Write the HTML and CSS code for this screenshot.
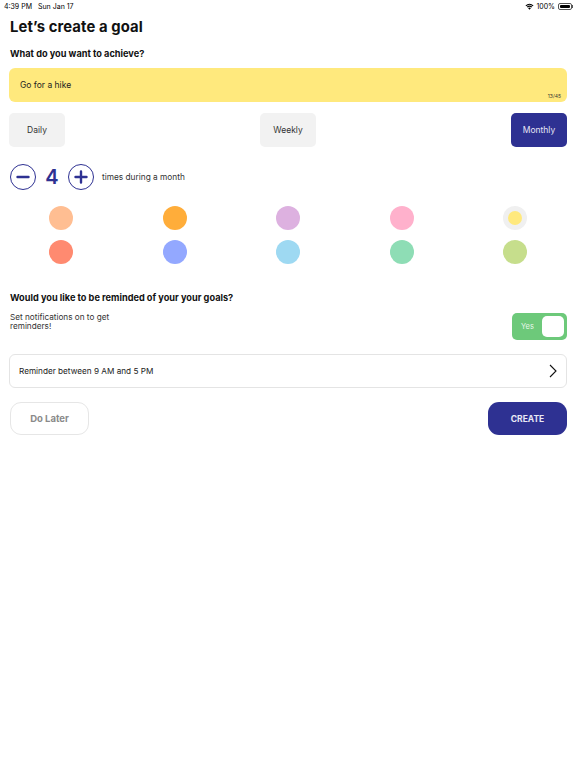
FILE: index.html
```html
<!DOCTYPE html>
<html>
<head>
<meta charset="utf-8">
<link rel="stylesheet" href="styles.css">
</head>
<body>
<div class="statusbar">
  <div class="sb-left"><span>4:39 PM</span><span>Sun Jan 17</span></div>
  <div class="sb-right">
    <svg class="wifi" width="9" height="7" viewBox="0 0 18 14"><path d="M9 13.5 L6 10.2 A4.5 4.5 0 0 1 12 10.2 Z" fill="#000"/><path d="M3.6 7.6 A8 8 0 0 1 14.4 7.6 L13 9.1 A6 6 0 0 0 5 9.1 Z" fill="#000"/><path d="M1 4.8 A11.8 11.8 0 0 1 17 4.8 L15.6 6.3 A9.8 9.8 0 0 0 2.4 6.3 Z" fill="#000"/></svg>
    <span>100%</span>
    <div class="battery"><div class="bat-body"><div class="bat-fill"></div></div><div class="bat-tip"></div></div>
  </div>
</div>
<main class="page">
  <h1 class="title">Let’s create a goal</h1>
  <h2 class="label">What do you want to achieve?</h2>
  <div class="goal-input">
    <span class="goal-text">Go for a hike</span>
    <span class="counter">13/45</span>
  </div>
  <div class="segments">
    <div class="seg">Daily</div>
    <div class="seg">Weekly</div>
    <div class="seg active">Monthly</div>
  </div>
  <div class="stepper">
    <div class="step-btn"><svg width="26" height="26" viewBox="0 0 26 26"><circle cx="13" cy="13" r="12.5" fill="none" stroke="#2e3192" stroke-width="1"/><path d="M7.5 13 H18.5" stroke="#2e3192" stroke-width="2.4" stroke-linecap="round"/></svg></div>
    <div class="count">4</div>
    <div class="step-btn"><svg width="26" height="26" viewBox="0 0 26 26"><circle cx="13" cy="13" r="12.5" fill="none" stroke="#2e3192" stroke-width="1"/><path d="M7.5 13 H18.5 M13 7.5 V18.5" stroke="#2e3192" stroke-width="2.4" stroke-linecap="round"/></svg></div>
    <div class="step-label">times during a month</div>
  </div>
</main>
<div class="colors">
  <div class="dot" style="background:#ffbe92"></div>
  <div class="dot" style="background:#ffad3a"></div>
  <div class="dot" style="background:#ddb1e0"></div>
  <div class="dot" style="background:#ffb1cc"></div>
  <div class="dot selected"><div class="inner" style="background:#ffe97d"></div></div>
  <div class="dot" style="background:#ff8a70"></div>
  <div class="dot" style="background:#93a8ff"></div>
  <div class="dot" style="background:#9ed9f2"></div>
  <div class="dot" style="background:#8eddb5"></div>
  <div class="dot" style="background:#c6de8c"></div>
</div>
<section class="page">
  <h2 class="label remind-title">Would you like to be reminded of your your goals?</h2>
  <div class="notify-row">
    <p class="notify-text">Set notifications on to get<br>reminders!</p>
    <div class="toggle"><span>Yes</span><div class="knob"></div></div>
  </div>
  <div class="reminder">
    <span>Reminder between 9 AM and 5 PM</span>
    <svg width="8" height="14" viewBox="0 0 8 14"><path d="M1 1 L7 7 L1 13" fill="none" stroke="#111" stroke-width="1.1"/></svg>
  </div>
  <div class="actions">
    <div class="btn later">Do Later</div>
    <div class="btn create">CREATE</div>
  </div>
</section>
</body>
</html>
```
FILE: styles.css
```css
* { box-sizing: border-box; }
html, body { margin: 0; padding: 0; background: #fff; }
body { font-family: "Inter", "Liberation Sans", sans-serif; color: #111; width: 576px; }

.statusbar { height: 12px; display: flex; justify-content: space-between; align-items: center; padding: 0 3px 0 4px; font-size: 7px; color: #000; }
.sb-left { display: flex; gap: 6px; }
.sb-right { display: flex; align-items: center; gap: 2px; }
.battery { display: flex; align-items: center; margin-left: 1px; }
.bat-body { width: 14px; height: 7px; border: 1px solid #555; border-radius: 2px; padding: 1px; }
.bat-fill { width: 100%; height: 100%; background: #000; border-radius: 1px; }
.bat-tip { width: 1px; height: 3px; background: #555; }

.page { padding: 0 9px 0 9px; }
.title { margin: 5px 0 0 1px; font-size: 14.8px; font-weight: 700; line-height: 20px; letter-spacing: 0.1px; }
.label { margin: 10px 0 0 1px; font-size: 9.2px; font-weight: 700; line-height: 14px; }

.goal-input { margin-top: 7px; height: 34px; background: #ffe97d; border-radius: 6px; position: relative; display: flex; align-items: center; padding-left: 11px; }
.goal-text { font-size: 8.5px; color: #222; }
.counter { position: absolute; right: 6px; bottom: 3px; font-size: 5px; color: #333; }

.segments { margin-top: 11px; display: flex; justify-content: space-between; }
.seg { width: 56px; height: 34px; border-radius: 5px; background: #f2f2f2; display: flex; align-items: center; justify-content: center; font-size: 8.5px; color: #333; }
.seg.active { background: #2e3192; color: #e6e6f5; }

.stepper { margin-top: 17px; display: flex; align-items: center; height: 26px; }
.step-btn { width: 28px; height: 28px; display: flex; align-items: center; justify-content: center; }
.count { width: 30px; text-align: center; font-size: 20px; font-weight: 600; color: #2e3192; }
.step-label { margin-left: 7px; font-size: 8.3px; color: #333; }

.colors { margin-top: 16px; display: grid; grid-template-columns: repeat(5, 113.5px); justify-content: center; row-gap: 10px; }
.dot { justify-self: center; width: 24px; height: 24px; border-radius: 50%; display: flex; align-items: center; justify-content: center; }
.dot.selected { background: #f0f0f0; }
.dot .inner { width: 14px; height: 14px; border-radius: 50%; }

.remind-title { margin-top: 27px; }
.notify-row { margin-top: 8px; display: flex; justify-content: space-between; align-items: flex-start; }
.notify-text { margin: 0 0 0 1px; font-size: 8.2px; line-height: 9px; color: #333; }
.toggle { width: 55px; height: 27px; background: #6dc97a; border-radius: 5px; display: flex; align-items: center; justify-content: space-between; padding: 0 3px 0 9px; }
.toggle span { font-size: 7.5px; color: #e8f6ea; }
.knob { width: 22px; height: 21px; background: #fff; border-radius: 5px; }

.reminder { margin-top: 14px; height: 34px; border: 1px solid #e4e4e4; border-radius: 6px; display: flex; align-items: center; justify-content: space-between; padding: 0 9px 0 9px; font-size: 8.2px; color: #222; }

.actions { margin-top: 14px; display: flex; justify-content: space-between; }
.btn { height: 33px; border-radius: 11px; display: flex; align-items: center; justify-content: center; font-size: 9px; font-weight: 700; }
.later { margin-left: 1px; width: 79px; border: 1px solid #e6e6e6; color: #8a8a8a; font-size: 9.5px; }
.create { width: 79px; background: #2e3192; color: #e8e8f4; font-size: 8.5px; }
```
